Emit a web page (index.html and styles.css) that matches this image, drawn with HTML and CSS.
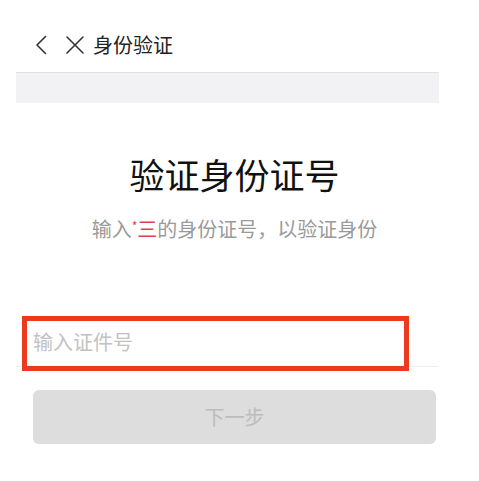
FILE: index.html
```html
<!DOCTYPE html>
<html lang="zh-CN">
<head>
<meta charset="utf-8">
<title>身份验证</title>
<link rel="stylesheet" href="styles.css">
</head>
<body>
<div class="page">
  <header class="nav">
    <svg class="icon-back" width="12" height="20" viewBox="0 0 12 20" aria-hidden="true">
      <path d="M10.5 1.5 L2 10 L10.5 18.5" fill="none" stroke="#333" stroke-width="1.6" stroke-linecap="round" stroke-linejoin="round"/>
    </svg>
    <svg class="icon-close" width="20" height="20" viewBox="0 0 20 20" aria-hidden="true">
      <path d="M2 2 L18 18 M18 2 L2 18" fill="none" stroke="#333" stroke-width="1.6" stroke-linecap="round"/>
    </svg>
    <span class="nav-title">身份验证</span>
  </header>
  <div class="band"></div>
  <main class="content">
    <h1 class="heading">验证身份证号</h1>
    <p class="sub">输入<span class="mark"><span class="star">*</span>三</span>的身份证号，以验证身份</p>
  </main>
  <div class="field">
    <input class="field-input" type="text" placeholder="输入证件号">
    <div class="highlight"></div>
  </div>
  <button class="next" type="button" disabled>下一步</button>
</div>
</body>
</html>
```

FILE: styles.css
```css
* { box-sizing: border-box; }

html, body {
  margin: 0;
  padding: 0;
  background: #ffffff;
}

body {
  font-family: "Noto Sans CJK SC", "Noto Sans", sans-serif;
  color: #222;
}

.page {
  width: 479px;
  min-height: 481px;
}

.nav {
  height: 72px;
  padding: 18px 0 0 35px;
  display: flex;
  align-items: center;
}

.icon-back { display: block; }

.icon-close {
  display: block;
  margin-left: 18px;
}

.nav-title {
  margin-left: 8px;
  font-size: 20px;
  line-height: 20px;
  color: #222;
}

.band {
  margin-left: 16px;
  width: 423px;
  height: 31px;
  border-top: 1px solid #e0e0e0;
  background: #f2f2f5;
}

.content {
  margin-left: 33px;
  width: 403px;
  text-align: center;
}

.heading {
  margin: 53px 0 0;
  font-size: 35px;
  line-height: 35px;
  font-weight: 400;
  color: #111;
}

.sub {
  margin: 28px 0 0;
  font-size: 20px;
  line-height: 20px;
  color: #9a9a9a;
}

.mark { color: #e0404e; }

.star {
  display: inline-block;
  font-size: 12px;
  line-height: 12px;
  vertical-align: top;
  margin-top: 1px;
}

.field {
  position: relative;
  margin: 78px 0 0 16px;
  width: 422px;
  height: 50px;
  border-bottom: 1px solid #eeeeee;
}

.field-input {
  display: block;
  width: 100%;
  height: 49px;
  border: 0;
  outline: none;
  padding: 0 0 0 17px;
  background: transparent;
  font-family: inherit;
  font-size: 20px;
  color: #333;
}

.field-input::placeholder { color: #c2c2c2; }

.highlight {
  position: absolute;
  left: 6px;
  top: -1px;
  width: 387px;
  height: 55px;
  border: 5px solid #ec3b1c;
  pointer-events: none;
}

.next {
  display: block;
  margin: 23px 0 0 33px;
  width: 403px;
  height: 54px;
  border: 0;
  border-radius: 6px;
  background: #dddddd;
  color: #bcbcbc;
  font-family: inherit;
  font-size: 20px;
  line-height: 20px;
}
```
